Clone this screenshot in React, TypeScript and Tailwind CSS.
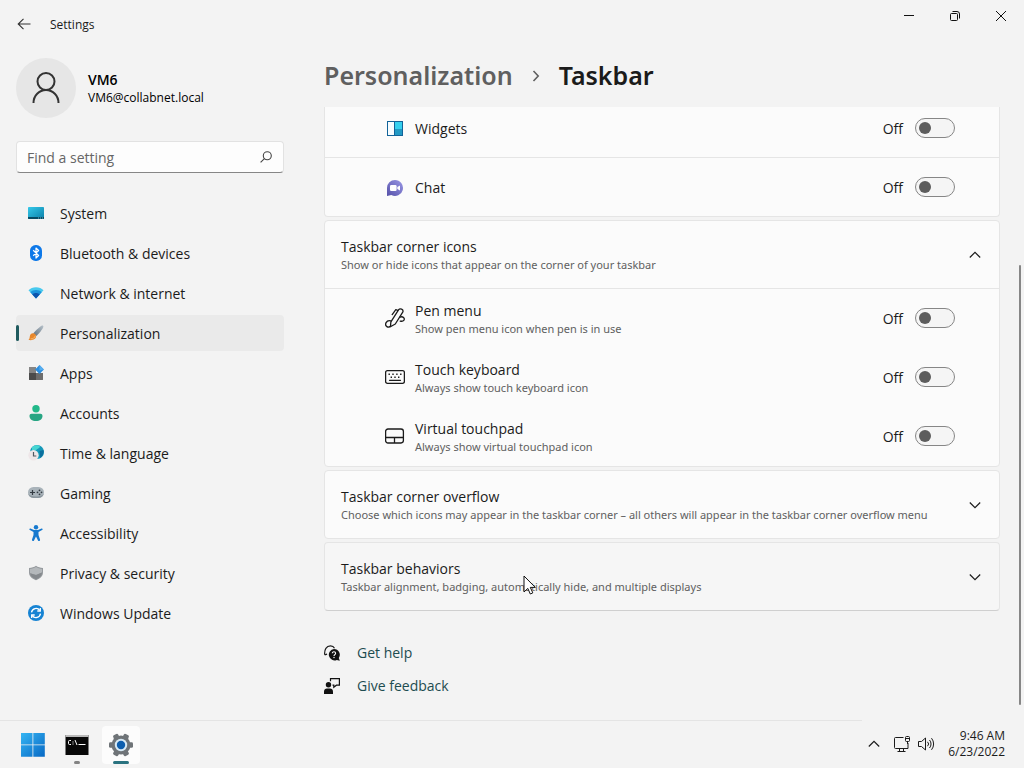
import type { ReactNode } from "react"

interface NavItem {
  label: string
  icon: ReactNode
  active?: boolean
}

interface SettingRowProps {
  id: string
  title: string
  description?: string
  icon: ReactNode
  className?: string
}

interface CardHeaderProps {
  title: string
  description: string
  expanded?: boolean
}

const navItems: NavItem[] = [
  { label: "System", icon: <SystemIcon /> },
  { label: "Bluetooth & devices", icon: <BluetoothIcon /> },
  { label: "Network & internet", icon: <NetworkIcon /> },
  { label: "Personalization", icon: <BrushIcon />, active: true },
  { label: "Apps", icon: <AppsIcon /> },
  { label: "Accounts", icon: <AccountsIcon /> },
  { label: "Time & language", icon: <TimeIcon /> },
  { label: "Gaming", icon: <GamingIcon /> },
  { label: "Accessibility", icon: <AccessibilityIcon /> },
  { label: "Privacy & security", icon: <ShieldIcon /> },
  { label: "Windows Update", icon: <UpdateIcon /> },
]

/* ---------- sidebar icons ---------- */

function SystemIcon() {
  return (
    <svg width="16" height="16" viewBox="0 0 16 16">
      <defs>
        <linearGradient id="sys" x1="0" y1="0" x2="1" y2="1">
          <stop offset="0" stopColor="#35c9ea" />
          <stop offset="1" stopColor="#0a7fa8" />
        </linearGradient>
      </defs>
      <rect y="2" width="16" height="12" rx="0.8" fill="url(#sys)" />
      <path d="M0 12h16v1.200a.8.8 0 0 1-.8.8H.8a.8.8 0 0 1-.8-.8z" fill="#064a63" />
      <path d="M10 13h1M12 13h1M14 13h1" stroke="#7fd3ea" strokeWidth="0.8" />
    </svg>
  )
}

function BluetoothIcon() {
  return (
    <svg width="16" height="16" viewBox="0 0 16 16">
      <rect x="2" width="12" height="16" rx="5.600" fill="#0d78e8" />
      <path d="M5.200 5.300l5.400 5.200L8 13V3l2.600 2.500-5.400 5.200" fill="none" stroke="#fff" strokeWidth="1.200" strokeLinejoin="round" />
    </svg>
  )
}

function NetworkIcon() {
  return (
    <svg width="16" height="16" viewBox="0 0 16 16">
      <path d="M.5 5.200C2.400 3.200 5 2.200 8 2.200s5.600 1 7.500 3L8 13.600z" fill="#48c9ee" />
      <path d="M2.300 7.200C3.800 5.700 5.700 4.900 8 4.900s4.200.8 5.700 2.300L8 13.600z" fill="#1c93dc" />
      <path d="M4.300 9.400C5.300 8.400 6.500 7.900 8 7.900s2.700.5 3.700 1.500L8 13.600z" fill="#0c53ac" />
    </svg>
  )
}

function BrushIcon() {
  return (
    <svg width="16" height="16" viewBox="0 0 16 16">
      <defs>
        <linearGradient id="handle" x1="0" y1="1" x2="1" y2="0">
          <stop offset="0" stopColor="#5d6f7e" />
          <stop offset="1" stopColor="#b9c3cb" />
        </linearGradient>
      </defs>
      <path d="M5.200 8.600C8 5.300 11.800 1.600 14 .5c.8-.4 1.700.4 1.400 1.300-.7 2.500-4.200 6.700-7.400 9.500z" fill="url(#handle)" />
      <path d="M4.800 8.300c1.800 0 3.200 1.300 3.300 3C8 14.500 3.500 16 .4 14.700c1.500-.9 1-2 1.500-3.800.4-1.600 1.500-2.600 2.900-2.600z" fill="#e8872b" />
      <path d="M2.600 13.900c2.400 0 4.200-1 4.700-3.300" fill="none" stroke="#f9c37c" strokeWidth="0.800" />
    </svg>
  )
}

function AppsIcon() {
  return (
    <svg width="16" height="16" viewBox="0 0 16 16">
      <path d="M1 2h7v6H1z" fill="#858585" />
      <path d="M1 8h7v7H1.600a.6.6 0 0 1-.6-.6z" fill="#4b4b4b" />
      <path d="M8 8h7v6.400a.6.6 0 0 1-.6.6H8z" fill="#6d6d6d" />
      <path d="M11.500 0l4.400 4.500L11.500 9 7.100 4.500z" fill="#2b8ee0" />
      <path d="M11.500 0l4.400 4.500-4.400 1z" fill="#57aef0" />
    </svg>
  )
}

function AccountsIcon() {
  return (
    <svg width="16" height="16" viewBox="0 0 16 16">
      <circle cx="8" cy="3.700" r="3.700" fill="#22b889" />
      <path d="M3.600 8.800h8.800c1.200 0 2.100.9 2.100 2.100 0 3-2.600 5-6.500 5s-6.500-2-6.500-5c0-1.200.9-2.100 2.100-2.100z" fill="#27a583" />
    </svg>
  )
}

function TimeIcon() {
  return (
    <svg width="16" height="16" viewBox="0 0 16 16">
      <circle cx="9" cy="7" r="7" fill="#1598b8" />
      <path d="M4 2.200C7-.4 11 0 12 1.800c-.4 2-3 1.600-4 3.400L4 5.600z" fill="#47d6d2" />
      <path d="M11.500 6l4-1c.8 3-1 6.500-3.200 8z" fill="#0b6e9d" />
      <circle cx="5.500" cy="10.200" r="5.200" fill="#eee6e8" />
      <path d="M5.500 7v4h2.800" fill="none" stroke="#525861" strokeWidth="1.200" />
    </svg>
  )
}

function GamingIcon() {
  return (
    <svg width="16" height="16" viewBox="0 0 16 16">
      <rect y="2" width="16" height="11" rx="5.500" fill="#a9b3ba" />
      <path d="M.2 8.600C.8 11.200 3 13 5.500 13h5c2.500 0 4.700-1.800 5.300-4.400C14 11 12 11.400 8 11.400S2 11 .2 8.600z" fill="#8b969e" />
      <path d="M4.500 5v5M2 7.500h5" stroke="#333b42" strokeWidth="1.200" />
      <g fill="#333b42">
        <circle cx="11.500" cy="5.300" r="0.900" />
        <circle cx="13.500" cy="7.300" r="0.900" />
        <circle cx="9.500" cy="7.300" r="0.900" />
        <circle cx="11.500" cy="9.300" r="0.900" />
      </g>
    </svg>
  )
}

function AccessibilityIcon() {
  return (
    <svg width="16" height="16" viewBox="0 0 16 16">
      <circle cx="8" cy="2.200" r="2.200" fill="#1679cf" />
      <path d="M2.500 3.500c-1-.4-1.700 1-.6 1.600L5.500 7v3L4 14.600c-.4 1.300 1.500 2 2 .8L8 11.500l2 3.900c.5 1.200 2.400.5 2-.8L10.500 10V7l3.600-1.900c1.100-.6.400-2-.6-1.600L10 5H6z" fill="#1679cf" />
    </svg>
  )
}

function ShieldIcon() {
  return (
    <svg width="16" height="16" viewBox="0 0 16 16">
      <path d="M8 .8c2 1.400 4.200 2 7 2.200v4.500c0 3.400-2.600 6-7 7.700-4.400-1.700-7-4.300-7-7.700V3c2.800-.2 5-.8 7-2.200z" fill="#969a9e" />
      <path d="M8 2c1.700 1.100 3.600 1.700 6 1.900v3.600L8 10 2 8.200V3.900C4.400 3.700 6.300 3.100 8 2z" fill="#b4b8bb" />
      <path d="M8 10l6-2.500c0 3-2.200 5.200-6 6.700-3.500-1.400-5.600-3.400-5.900-6z" fill="#85898d" />
    </svg>
  )
}

function UpdateIcon() {
  return (
    <svg width="16" height="16" viewBox="0 0 16 16">
      <circle cx="8" cy="8" r="8" fill="#1683d3" />
      <path d="M3.500 7.400a4.600 4.600 0 0 1 8.300-2M12.500 8.600a4.600 4.600 0 0 1-8.300 2" fill="none" stroke="#fff" strokeWidth="1.300" />
      <path d="M12.300 3v3h-3M3.700 13v-3h3" fill="none" stroke="#fff" strokeWidth="1.300" />
    </svg>
  )
}

/* ---------- content icons ---------- */

function WidgetsIcon() {
  return (
    <svg width="20" height="20" viewBox="0 0 20 20">
      <path d="M2 3h16v15H2z" fill="#126399" />
      <path d="M3 4h6v13H3z" fill="#f6fcff" />
      <path d="M10 4h7v7h-7z" fill="#35d0ee" />
      <path d="M10 11h7v6h-7z" fill="#2199c4" />
    </svg>
  )
}

function ChatIcon() {
  return (
    <svg width="20" height="20" viewBox="0 0 20 20">
      <defs>
        <linearGradient id="chat" x1="1" y1="0" x2="0" y2="1">
          <stop offset="0" stopColor="#9a98e6" />
          <stop offset="1" stopColor="#5550a8" />
        </linearGradient>
      </defs>
      <path d="M10 3a8 8 0 1 1-3.700 15.100L2 19V11a8 8 0 0 1 8-8z" fill="url(#chat)" />
      <rect x="5" y="8" width="6.600" height="6" rx="1.200" fill="#fff" />
      <path d="M12.300 10l2.700-1.600v5.200L12.300 12z" fill="#fff" />
    </svg>
  )
}

function PenIcon() {
  return (
    <svg width="20" height="20" viewBox="0 0 20 20" fill="none" stroke="#1b1b1b" strokeWidth="1.300" strokeLinejoin="round" strokeLinecap="round">
      <path d="M5.400 18.700l.5-4.800L13.700 1.700c1.300-1.900 5-.2 4.200 2.200L10.300 16z" />
      <path d="M12.700 2.400L10.800 1.700 7.200 6.600M5.700 12.800C1.200 11.700-.8 16.800 1.900 18.600c1 .7 2.100.5 2.900 0M14.900 9.300c3-1.700 5.300 1.300 3.900 3.100-.8 1-2.200 1-3.600.7" />
    </svg>
  )
}

function KeyboardIcon() {
  return (
    <svg width="20" height="20" viewBox="0 0 20 20" fill="none" stroke="#1b1b1b">
      <rect x="0.600" y="3.600" width="18.800" height="12.800" rx="1.800" strokeWidth="1.300" />
      <path d="M4.500 13.300h11" strokeWidth="1.200" strokeLinecap="round" />
      <path d="M3.500 7.300h1.400M7.300 7.300h1.400M11.200 7.300h1.400M15.100 7.300h1.400M5.600 10.300H7M9.300 10.300h1.400M13 10.300h1.400" strokeWidth="1.400" />
    </svg>
  )
}

function TouchpadIcon() {
  return (
    <svg width="20" height="20" viewBox="0 0 20 20" fill="none" stroke="#1b1b1b" strokeWidth="1.300">
      <rect x="0.600" y="3" width="17.800" height="14" rx="2.400" />
      <path d="M.6 11.500h17.800M9.500 11.500V17" />
    </svg>
  )
}

function HelpIcon() {
  return (
    <svg width="16" height="16" viewBox="0 0 16 16">
      <path d="M.7 9.800C.2 4.500 2.400.8 6.500.8c2 0 3.300.9 4 2.400M.7 9.800l2.400-.6" fill="none" stroke="#1b1b1b" strokeWidth="1.200" />
      <path d="M10 4a5.700 5.700 0 0 1 4.800 8.900l1 2.900-3-.9A5.700 5.700 0 1 1 10 4z" fill="#111" />
      <path d="M8.300 8.300c0-2.200 3.300-2 3.300 0 0 1.300-1.600 1.300-1.600 2.600" fill="none" stroke="#fff" strokeWidth="1.100" />
      <circle cx="10" cy="12.500" r="0.700" fill="#fff" />
    </svg>
  )
}

function FeedbackIcon() {
  return (
    <svg width="16" height="16" viewBox="0 0 16 16">
      <circle cx="4.500" cy="6.800" r="2.700" fill="#111" />
      <path d="M0 16v-2.500C0 11.500 1.300 10.500 3 10.500h3c1.700 0 3 1 3 3V16z" fill="#111" />
      <path d="M6.500 3.200V.7h8.900v6.500h-3l-2.600 2.100V7.200H8.500" fill="none" stroke="#111" strokeWidth="1.200" />
    </svg>
  )
}

function Chevron({ up }: { up?: boolean }) {
  return (
    <svg className="shrink-0" width="12" height="12" viewBox="0 0 12 12" fill="none" stroke="#1b1b1b" strokeWidth="1.200">
      <path d={up ? "M.8 8.500L6 3.300l5.200 5.200" : "M.8 3.500L6 8.700l5.200-5.200"} />
    </svg>
  )
}

/* ---------- building blocks ---------- */

function Toggle({ id, label }: { id: string; label: string }) {
  return (
    <div className="flex items-center gap-3">
      <label htmlFor={id} className="pt-0.5 text-sm leading-5">
        Off
      </label>
      <input
        id={id}
        type="checkbox"
        role="switch"
        aria-label={label}
        className="flex h-5 w-10 appearance-none items-center rounded-full border border-[#868686] bg-[#f5f5f5] px-[3px] before:size-3 before:rounded-full before:bg-[#5d5d5d]"
      />
    </div>
  )
}

function SettingRow({ id, title, description, icon, className = "h-[59px] pb-0.5" }: SettingRowProps) {
  return (
    <div className={`flex items-center pr-11 pl-[60px] ${className}`}>
      <span className="mr-2.5 shrink-0">{icon}</span>
      <div className={`flex-1 ${description ? "pt-1" : "pt-0.5"}`}>
        <p className="text-sm leading-[18px]">{title}</p>
        {description && <p className="font-['Noto_Sans',sans-serif] text-[11px] leading-[18px] text-[#606060]">{description}</p>}
      </div>
      <Toggle id={id} label={title} />
    </div>
  )
}

function CardHeader({ title, description, expanded }: CardHeaderProps) {
  return (
    <button type="button" aria-expanded={!!expanded} className="flex h-[67px] w-full items-center pr-[18px] pl-4 text-left">
      <span className="min-w-0 flex-1 pt-0.5 whitespace-nowrap">
        <span className="block text-sm leading-[18px]">{title}</span>
        <span className="block font-['Noto_Sans',sans-serif] text-[11px] leading-[18px] text-[#606060]">{description}</span>
      </span>
      <Chevron up={expanded} />
    </button>
  )
}

function TitleBar() {
  return (
    <header className="flex h-12 justify-between">
      <div className="flex items-center gap-[18px] pl-4">
        <button type="button" aria-label="Back">
          <svg width="16" height="16" viewBox="0 0 16 16" fill="none" stroke="#333" strokeWidth="1.100">
            <path d="M14.500 8h-12M7.500 2.800L2.200 8l5.300 5.200" />
          </svg>
        </button>
        <span className="pt-0.5 text-xs">Settings</span>
      </div>
      <div className="flex h-8">
        <button type="button" aria-label="Minimize" className="grid w-[46px] place-items-center">
          <svg width="10" height="10" viewBox="0 0 10 10" stroke="#111">
            <path d="M0 4.500h10" />
          </svg>
        </button>
        <button type="button" aria-label="Restore" className="grid w-[46px] place-items-center">
          <svg width="10" height="10" viewBox="0 0 10 10" fill="none" stroke="#111">
            <rect x="0.500" y="2.500" width="7" height="7" rx="1" />
            <path d="M2.500.5H7A2.500 2.500 0 0 1 9.500 3v4.500" />
          </svg>
        </button>
        <button type="button" aria-label="Close" className="grid w-[46px] place-items-center">
          <svg width="10" height="10" viewBox="0 0 10 10" stroke="#111">
            <path d="M0 0l10 10M10 0L0 10" />
          </svg>
        </button>
      </div>
    </header>
  )
}

function Sidebar() {
  return (
    <aside className="w-[268px] shrink-0">
      <div className="flex items-center gap-3 pt-2.5">
        <div className="grid size-[60px] place-items-center rounded-full bg-[#e6e6e6]">
          <svg width="30" height="32" viewBox="0 0 30 32" fill="none" stroke="#333" strokeWidth="2">
            <circle cx="15" cy="9.500" r="8.500" />
            <path d="M2.500 31a12.500 13 0 0 1 25 0" />
          </svg>
        </div>
        <div className="pt-0.5">
          <p className="text-sm leading-[18px] font-semibold text-black">VM6</p>
          <p className="text-xs leading-[18px] text-black">VM6@collabnet.local</p>
        </div>
      </div>

      <div className="relative mt-[23px]">
        <input
          type="search"
          aria-label="Find a setting"
          placeholder="Find a setting"
          className="h-8 w-full rounded border border-[#e2e2e2] border-b-[#868686] bg-[#fdfdfd] px-2.5 text-sm placeholder:text-[#666]"
        />
        <svg className="absolute top-2.5 right-3" width="12" height="12" viewBox="0 0 12 12" fill="none" stroke="#444" strokeWidth="1.100">
          <circle cx="7.300" cy="4.700" r="4" />
          <path d="M4.400 7.600L.6 11.400" />
        </svg>
      </div>

      <nav className="mt-[22px] flex flex-col gap-1">
        {navItems.map((item) => (
          <a
            key={item.label}
            href="#"
            aria-current={item.active ? "page" : undefined}
            className={`relative flex h-9 items-center gap-4 rounded pl-3 text-sm ${item.active ? "bg-[#eaeaea]" : ""}`}
          >
            {item.active && <span className="absolute top-2.5 left-0 h-4 w-[3px] rounded-full bg-[#1f5a5e]" />}
            {item.icon}
            <span className="pt-0.5">{item.label}</span>
          </a>
        ))}
      </nav>
    </aside>
  )
}

function Content() {
  return (
    <main className="ml-10 min-w-0 flex-1">
      <h1 className="flex h-[59px] items-center gap-[17px] pb-1 font-['Noto_Sans',sans-serif] text-[25px] font-semibold">
        <span className="text-[#5f5f5f]">Personalization</span>
        <svg width="12" height="12" viewBox="0 0 12 12" fill="none" stroke="#5f5f5f" strokeWidth="1.600">
          <path d="M3.500 1l4.700 5-4.700 5" />
        </svg>
        <span>Taskbar</span>
      </h1>

      <div className="flex flex-col gap-[3px]">
        <section className="rounded-b border border-t-0 border-[#e5e5e5] bg-[#fbfbfb]">
          <SettingRow id="widgets" title="Widgets" icon={<WidgetsIcon />} className="h-[51px] border-b border-[#e5e5e5] pb-2" />
          <SettingRow id="chat" title="Chat" icon={<ChatIcon />} className="h-[58px]" />
        </section>

        <section className="rounded border border-[#e5e5e5] bg-[#fbfbfb]">
          <CardHeader title="Taskbar corner icons" description="Show or hide icons that appear on the corner of your taskbar" expanded />
          <div className="border-t border-[#e5e5e5]">
            <SettingRow id="pen" title="Pen menu" description="Show pen menu icon when pen is in use" icon={<PenIcon />} />
            <SettingRow id="keyboard" title="Touch keyboard" description="Always show touch keyboard icon" icon={<KeyboardIcon />} />
            <SettingRow id="touchpad" title="Virtual touchpad" description="Always show virtual touchpad icon" icon={<TouchpadIcon />} />
          </div>
        </section>

        <section className="rounded border border-[#e5e5e5] bg-[#fbfbfb]">
          <CardHeader
            title="Taskbar corner overflow"
            description="Choose which icons may appear in the taskbar corner – all others will appear in the taskbar corner overflow menu"
          />
        </section>

        <section className="relative rounded border border-[#e5e5e5] border-b-[#cfcfcf] bg-[#f6f6f6]">
          <CardHeader title="Taskbar behaviors" description="Taskbar alignment, badging, automatically hide, and multiple displays" />
          {/* mouse pointer */}
          <svg className="absolute top-8 left-[198px]" width="13" height="20" viewBox="0 0 13 20">
            <path d="M1 1v16l3.800-3.600 2.500 5.600 2.500-1.100-2.500-5.500h5z" fill="#fff" stroke="#111" />
          </svg>
        </section>
      </div>

      <div className="mt-[25px] flex flex-col items-start text-sm text-[#1d4c50]">
        <a href="#" className="flex h-[33px] items-center gap-[17px]">
          <HelpIcon />
          Get help
        </a>
        <a href="#" className="flex h-[33px] items-center gap-[17px]">
          <FeedbackIcon />
          Give feedback
        </a>
      </div>
    </main>
  )
}

function Taskbar() {
  return (
    <footer className="flex h-12">
      <div className="flex flex-1 items-center gap-1.5 border-t border-[#e4e4e4] pl-3.5">
        <button type="button" aria-label="Start" className="grid size-[38px] place-items-center">
          <svg width="24" height="24" viewBox="0 0 24 24">
            <defs>
              <linearGradient id="win" x1="0" y1="0" x2="1" y2="1">
                <stop offset="0" stopColor="#35b5f3" />
                <stop offset="1" stopColor="#0768c4" />
              </linearGradient>
            </defs>
            <path d="M0 0h11.500v11.500H0zM12.300 0h11.500v11.500H12.300zM0 12.300h11.500v11.500H0zM12.300 12.300h11.500v11.500H12.300z" fill="url(#win)" />
          </svg>
        </button>
        <button type="button" aria-label="Command Prompt" className="relative grid size-[38px] place-items-center">
          <svg width="24" height="22" viewBox="0 0 24 22">
            <path d="M.5 1h23v20H.5z" fill="#080808" />
            <path d="M.5 1h23v2H.5z" fill="#b9b9b9" />
            <path d="M6 6.500H4.500q-1 0-1 1v2q0 1 1 1H6M8 7.500v1M8 9.500v1M10 6l2 5M13.500 10.500h7" fill="none" stroke="#fff" />
          </svg>
          <span className="absolute bottom-0 h-[3px] w-1.5 rounded-full bg-[#838383]" />
        </button>
        <button type="button" aria-label="Settings" className="relative grid size-[38px] place-items-center rounded bg-[#fcfcfc]">
          <svg width="26" height="26" viewBox="0 0 26 26">
            <g fill="#6f7478">
              <circle cx="13" cy="13" r="9.500" />
              <rect x="10.200" y="1" width="5.600" height="24" rx="1.400" transform="rotate(30 13 13)" />
              <rect x="10.200" y="1" width="5.600" height="24" rx="1.400" transform="rotate(90 13 13)" />
              <rect x="10.200" y="1" width="5.600" height="24" rx="1.400" transform="rotate(150 13 13)" />
            </g>
            <circle cx="13" cy="13" r="6.200" fill="#d7e9f5" />
            <circle cx="13" cy="13" r="4.200" fill="#0d5eae" />
          </svg>
          <span className="absolute bottom-0 h-[3px] w-4 rounded-full bg-[#2a7380]" />
        </button>
      </div>

      <div className="flex w-[162px] items-center justify-end pr-[19px]">
        <button type="button" aria-label="Show hidden icons" className="mr-3.5">
          <Chevron up />
        </button>
        <svg className="mr-2" width="16" height="16" viewBox="0 0 16 16" fill="none" stroke="#1b1b1b">
          <path d="M9.500 1.500h-8a1 1 0 0 0-1 1v9a1 1 0 0 0 1 1h12.500V7M5.500 12.500v3M9.500 12.500v3M3.500 15.500h8" />
          <rect x="11.500" y="0.500" width="4" height="5" rx="1" />
          <path d="M11.500 2.500h4M13.500 5.500V8" />
        </svg>
        <svg className="mr-[13px]" width="17" height="16" viewBox="0 0 17 16" fill="none" stroke="#1b1b1b">
          <path d="M.5 5.500h3L7.500 2v12l-4-3.500h-3z" strokeLinejoin="round" />
          <path d="M9.500 5.800a3 3 0 0 1 0 4.400M11.500 4a6 6 0 0 1 0 8M13.500 2.200a9 9 0 0 1 0 11.600" />
        </svg>
        <div className="text-right text-xs leading-4 whitespace-nowrap">
          <p>9:46 AM</p>
          <p>6/23/2022</p>
        </div>
      </div>
    </footer>
  )
}

export default function App() {
  return (
    <div className="flex min-h-screen flex-col bg-[#f3f3f3] font-['Open_Sans','Noto_Sans',sans-serif] text-[#1b1b1b]">
      <TitleBar />
      <div className="flex flex-1 pl-4">
        <Sidebar />
        <Content />
        {/* scroll thumb */}
        <div className="flex w-6 justify-end pt-[217px] pr-[3px] pb-[15px]">
          <div className="w-0.5 rounded-full bg-[#868686]" />
        </div>
      </div>
      <Taskbar />
    </div>
  )
}
